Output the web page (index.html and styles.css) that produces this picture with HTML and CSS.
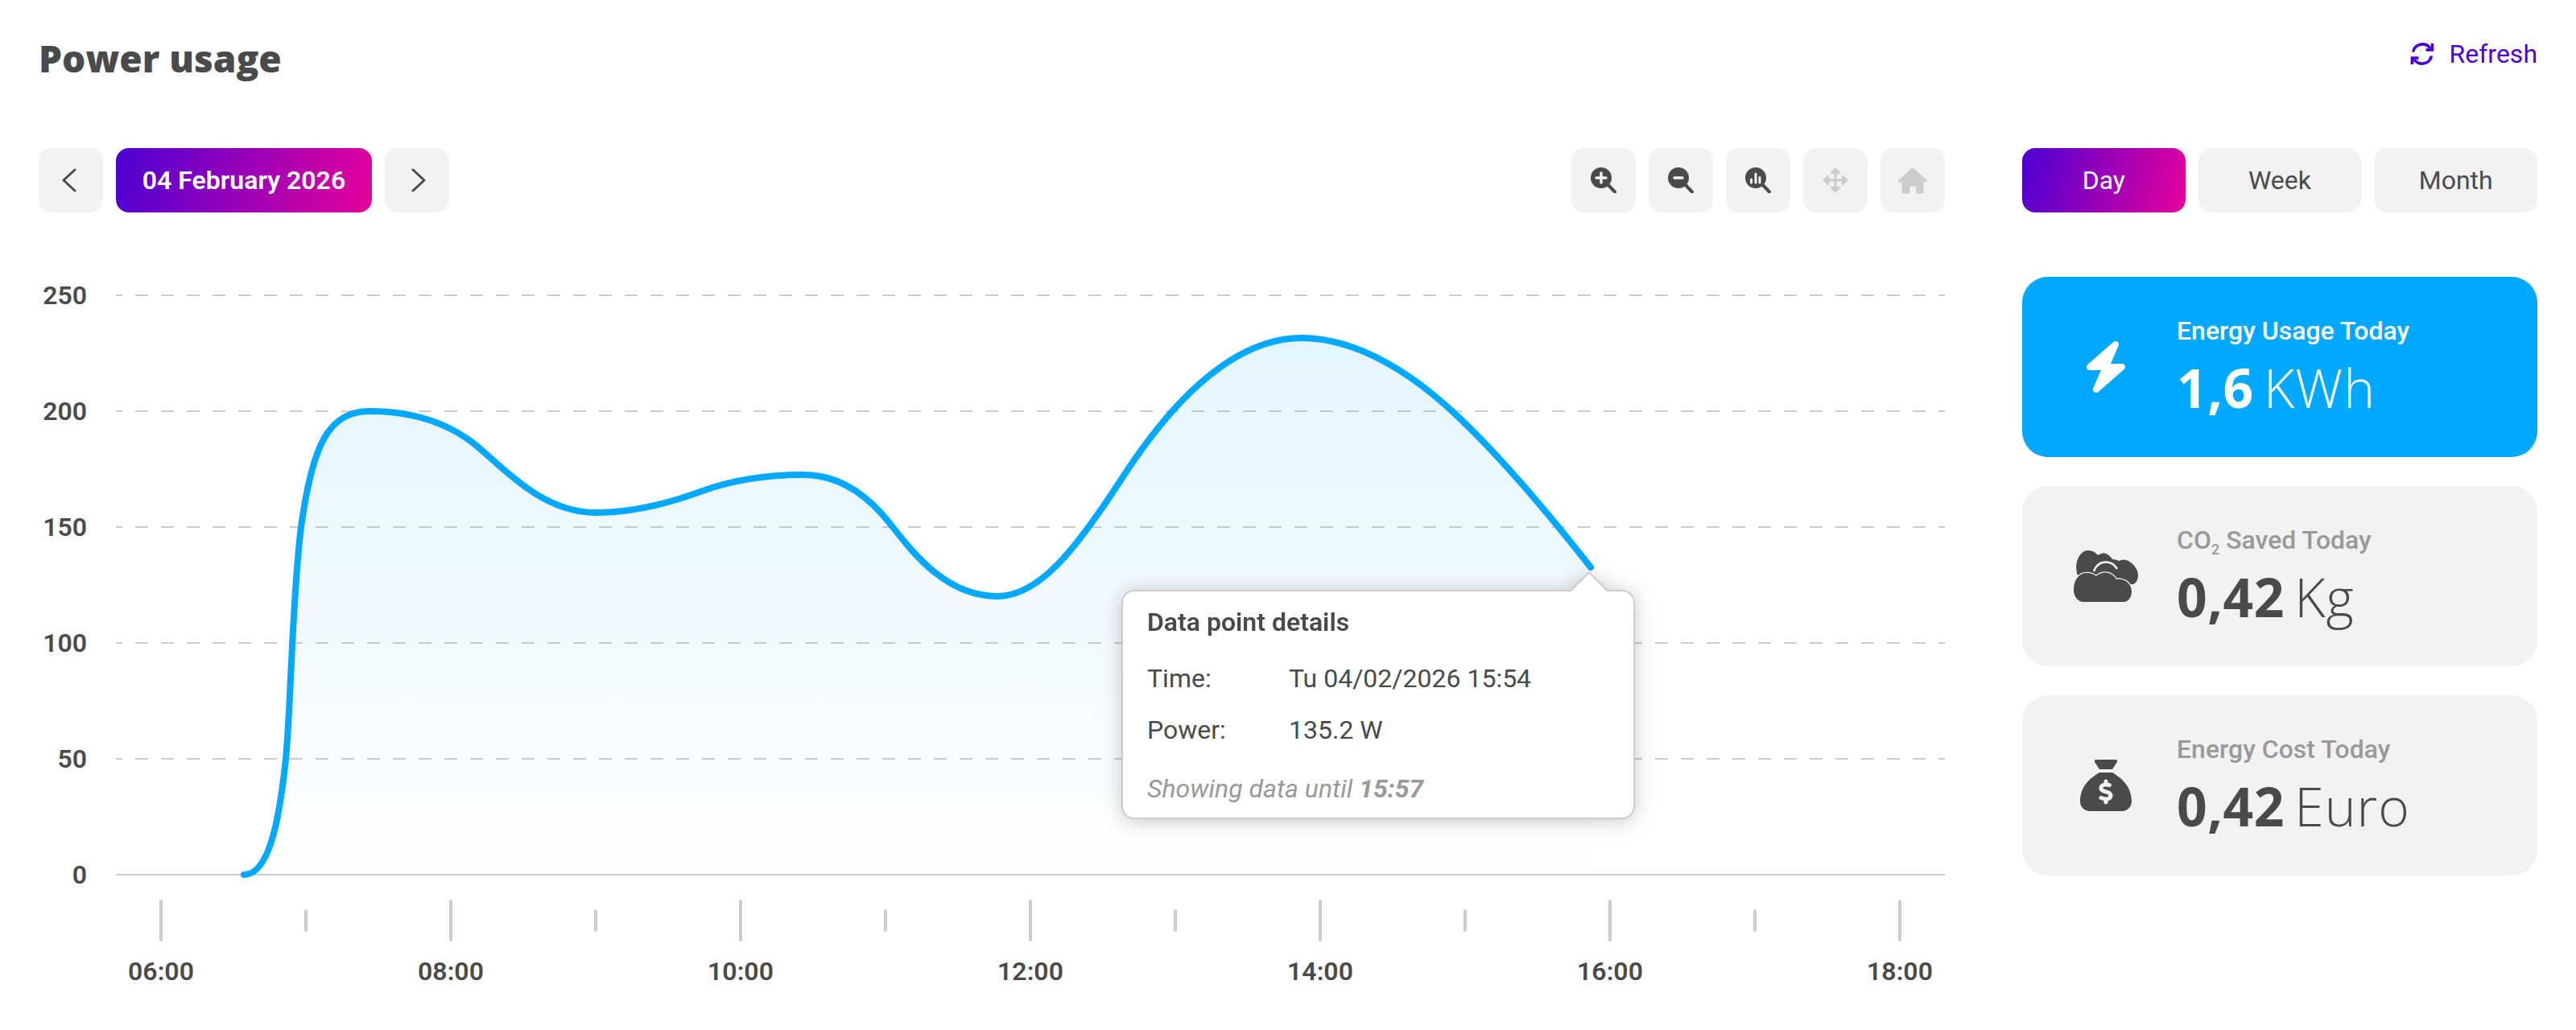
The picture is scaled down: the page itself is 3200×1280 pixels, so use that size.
FILE: index.html
```html
<!DOCTYPE html>
<html lang="en">
<head>
<meta charset="utf-8">
<title>Power usage</title>
<link rel="stylesheet" href="styles.css">
</head>
<body>
<div class="page">
  <header class="topbar">
    <h1 class="title">Power usage</h1>
    <a class="refresh">
      <svg class="refresh-icon" viewBox="0 0 30 30"><path d="M3.6 12.5A11.8 11.8 0 0 1 25 8.2M26.4 17.5A11.8 11.8 0 0 1 5 21.8"/><path d="M27.5 2v8h-8M2.500 28v-8h8"/></svg>
      <span>Refresh</span>
    </a>
  </header>
  <main class="layout">
    <section class="chart-col">
      <div class="toolbar">
        <div class="date-nav">
          <button class="btn btn-square"><svg class="chev chev-left" viewBox="0 0 20 30"><path d="M17 2 3 15l14 13"/></svg></button>
          <button class="btn btn-date">04 February 2026</button>
          <button class="btn btn-square"><svg class="chev chev-right" viewBox="0 0 20 30"><path d="M3 2l14 13L3 28"/></svg></button>
        </div>
        <div class="tools">
          <button class="btn btn-square"><svg class="tool" viewBox="0 0 32 32"><circle class="dark" cx="13" cy="13" r="13"/><path class="handle" d="M21 21l9 9.500"/><path class="glyph" d="M13 7v12M7 13h12"/></svg></button>
          <button class="btn btn-square"><svg class="tool" viewBox="0 0 32 32"><circle class="dark" cx="13" cy="13" r="13"/><path class="handle" d="M21 21l9 9.500"/><path class="glyph" d="M8 13h10"/></svg></button>
          <button class="btn btn-square"><svg class="tool" viewBox="0 0 32 32"><circle class="dark" cx="13" cy="13" r="13"/><path class="handle" d="M21 21l9 9.500"/><path class="glyph thin" d="M7.500 19v-4M13 19V8M18 19v-6.500"/></svg></button>
          <button class="btn btn-square"><svg class="tool" viewBox="0 0 33 33"><path class="pan-shaft" d="M16.500 5v23M4 16.500h25"/><path class="pan-head" d="M16.500 1.500l5 5v1h-10v-1zM16.500 31.500l-5-5v-1h10v1zM1.500 16.500l5-5h1v10h-1zM31.500 16.500l-5 5h-1v-10h1z"/></svg></button>
          <button class="btn btn-square"><svg class="tool tool-home" viewBox="0 0 36 33"><path class="home" d="M18 0.500c.5 0 1 .2 1.400.6L35 15.500c1.300 1.200.6 3-1 3h-2.500V30c0 1.400-1 2.500-2.500 2.500h-4.500c-1.400 0-2.500-1-2.500-2.500v-5c0-1-.7-1.500-1.500-1.500h-4.500c-.9 0-1.500.6-1.500 1.500v5c0 1.400-1 2.500-2.500 2.500H7c-1.400 0-2.500-1-2.500-2.500V18.500H2c-1.600 0-2.300-1.800-1-3L16.600 1.100c.4-.4.900-.6 1.400-.6z"/></svg></button>
        </div>
      </div>
      <div class="chart">
        <svg class="plot" viewBox="48 300 2368 960">
          <defs>
            <linearGradient id="area" gradientUnits="userSpaceOnUse" x1="0" y1="420" x2="0" y2="1087">
              <stop offset="0" stop-color="#00a8ff" stop-opacity=".11"/>
              <stop offset="1" stop-color="#00a8ff" stop-opacity="0"/>
            </linearGradient>
          </defs>
          <g class="grid">
            <path d="M144 367H2416M144 511H2416M144 655H2416M144 799H2416M144 943H2416"/>
          </g>
          <path class="axis" d="M144 1087H2416"/>
          <g class="ticks">
            <path d="M200 1120v48M560 1120v48M920 1120v48M1280 1120v48M1640 1120v48M2000 1120v48M2360 1120v48"/>
            <path d="M380 1132v24M740 1132v24M1100 1132v24M1460 1132v24M1820 1132v24M2180 1132v24"/>
          </g>
          <g class="ylabels">
            <text x="108" y="378">250</text>
            <text x="108" y="522">200</text>
            <text x="108" y="666">150</text>
            <text x="108" y="810">100</text>
            <text x="108" y="954">50</text>
            <text x="108" y="1098">0</text>
          </g>
          <g class="xlabels">
            <text x="200" y="1218">06:00</text>
            <text x="560" y="1218">08:00</text>
            <text x="920" y="1218">10:00</text>
            <text x="1280" y="1218">12:00</text>
            <text x="1640" y="1218">14:00</text>
            <text x="2000" y="1218">16:00</text>
            <text x="2360" y="1218">18:00</text>
          </g>
          <path class="area" d="M303 1087C332 1087 346 1030 355 943C361 885 363 740 374 655C388 553 408 511 459 511C495 511 545 518 587 550C622 577 670 637 740 637C790 637 840 622 870 611C905 598 950 590 998 590C1040 590 1075 612 1105 650C1135 688 1175 741 1239 741C1290 741 1335 685 1392 597C1425 546 1510 420 1617 420C1690 420 1760 470 1805 512C1860 563 1925 640 1976 705V1087Z"/>
          <path class="line" d="M303 1087C332 1087 346 1030 355 943C361 885 363 740 374 655C388 553 408 511 459 511C495 511 545 518 587 550C622 577 670 637 740 637C790 637 840 622 870 611C905 598 950 590 998 590C1040 590 1075 612 1105 650C1135 688 1175 741 1239 741C1290 741 1335 685 1392 597C1425 546 1510 420 1617 420C1690 420 1760 470 1805 512C1860 563 1925 640 1976 705"/>
        </svg>
        <div class="tooltip">
          <div class="tooltip-title">Data point details</div>
          <div class="tooltip-rows">
            <span>Time:</span><span>Tu 04/02/2026 15:54</span>
            <span>Power:</span><span>135.2 W</span>
          </div>
          <div class="tooltip-note">Showing data until <b>15:57</b></div>
        </div>
      </div>
    </section>
    <aside class="side-col">
      <div class="tabs">
        <button class="btn btn-tab active">Day</button>
        <button class="btn btn-tab">Week</button>
        <button class="btn btn-tab">Month</button>
      </div>
      <div class="cards">
        <div class="card card-blue">
          <div class="card-icon"><svg class="icon-bolt" viewBox="0 0 448 512"><path d="M349.400 44.600c5.900-13.700 1.500-29.700-10.600-38.500s-28.600-8.100-40 1.700l-256 224c-10 8.800-13.600 22.900-8.900 35.300S50.700 288 64 288H175.500L98.600 467.400c-5.900 13.700-1.500 29.700 10.600 38.500s28.600 8.100 40-1.700l256-224c10-8.800 13.600-22.900 8.900-35.300s-16.600-20.700-30-20.700H272.500L349.400 44.600z"/></svg></div>
          <div class="card-text">
            <div class="card-label">Energy Usage Today</div>
            <div class="card-value"><b>1,6</b> KWh</div>
          </div>
        </div>
        <div class="card">
          <div class="card-icon"><svg class="icon-clouds" viewBox="0 0 80 64">
            <path d="M4 27C1 16 7 0 18 0C23 0 27 2 30 6C33 4 36 3 40 4C43 5 46 8 48 11C52 11 54 12 56 13C60 11 64 11 68 13C75 17 80 24 80 31C80 36 78 40 74 42L40 42L4 30Z"/>
            <path class="cloud-arc" d="M25 26C28 18 34 14.500 40 14.500C46 14.500 51 18 54 23"/>
            <path class="cloud-front" d="M12 64C5 64 0 57 0 49C0 36 7 28 16 28C21 28 25 29.500 28 32C31 29 35 27.500 39 27.500C45 27.500 50 31 53 36C55 35.500 57 35.500 59 36C66 37 72 43 72 51C72 58 68 64 62 64Z"/>
          </svg></div>
          <div class="card-text">
            <div class="card-label">CO<sub>2</sub> Saved Today</div>
            <div class="card-value"><b>0,42</b> Kg</div>
          </div>
        </div>
        <div class="card">
          <div class="card-icon"><svg class="icon-sack" viewBox="0 0 512 512"><path d="M320 96H192L144.600 24.900C137.500 14.200 145.100 0 157.900 0H354.100c12.800 0 20.400 14.200 13.300 24.900L320 96zM192 128H320c3.800 2.500 8.100 5.300 13 8.400C389.700 172.700 512 250.900 512 416c0 53-43 96-96 96H96c-53 0-96-43-96-96C0 250.900 122.300 172.700 179 136.400l0 0 0 0c4.800-3.100 9.200-5.900 13-8.400zm84 88c0-11-9-20-20-20s-20 9-20 20v14c-7.600 1.700-15.200 4.400-22.200 8.500c-13.900 8.300-25.900 22.800-25.800 43.900c.1 20.300 12 33.100 24.700 40.700c11 6.600 24.700 10.800 35.600 14l1.700 .5c12.600 3.800 21.800 6.800 28 10.700c5.100 3.200 5.800 5.400 5.900 8.200c.1 5-1.800 8-5.900 10.500c-5 3.100-12.900 5-21.400 4.700c-11.100-.4-21.500-3.900-35.100-8.500c-2.300-.8-4.700-1.600-7.200-2.400c-10.500-3.500-21.800 2.200-25.300 12.600s2.200 21.800 12.600 25.300c1.900 .6 4 1.300 6.100 2.100l0 0 0 0c8.300 2.900 17.900 6.200 28.200 8.400V424c0 11 9 20 20 20s20-9 20-20V410.200c8-1.700 16-4.500 23.200-9c14.300-8.900 25.100-24.100 24.800-45c-.3-20.300-11.700-33.400-24.600-41.600c-11.500-7.200-25.900-11.600-37.100-15l-.7-.2c-12.800-3.900-21.900-6.700-28.300-10.500c-5.200-3.100-5.300-4.900-5.300-6.700c0-3.700 1.400-6.500 6.200-9.300c5.400-3.200 13.600-5.100 21.500-5c9.600 .1 20.200 2.200 31.200 5.200c10.700 2.800 21.600-3.500 24.500-14.200s-3.500-21.600-14.200-24.500c-6.500-1.700-13.700-3.400-21.100-4.700V216z"/></svg></div>
          <div class="card-text">
            <div class="card-label">Energy Cost Today</div>
            <div class="card-value"><b>0,42</b> Euro</div>
          </div>
        </div>
      </div>
    </aside>
  </main>
</div>
</body>
</html>
```
FILE: styles.css
```css
* { box-sizing: border-box; }
html, body { margin: 0; background: #fff; }
body { font-family: Roboto, "Liberation Sans", sans-serif; color: #4a4a4a; font-size: 32px; }
.page { width: 3200px; height: 1280px; padding: 0 48px; overflow: hidden; }

.topbar { height: 184px; display: flex; justify-content: space-between; align-items: flex-start; }
.title { margin: 44px 0 0; font-family: "Open Sans", sans-serif; font-weight: 800; font-size: 46px; line-height: 56px; color: #4a4a4a; }
.refresh { margin-top: 47px; display: flex; align-items: center; gap: 19px; color: #4b00d4; font-size: 32px; line-height: 40px; }
.refresh-icon { width: 30px; height: 30px; fill: none; stroke: #4b00d4; stroke-width: 3.6; }

.layout { display: grid; grid-template-columns: 2368px 640px; column-gap: 96px; }
.chart-col { display: flex; flex-direction: column; }
.toolbar { display: flex; justify-content: space-between; height: 80px; }
.date-nav, .tools { display: flex; gap: 16px; }

.btn { border: 0; margin: 0; padding: 0; height: 80px; border-radius: 16px; background: #f2f2f2; color: #4a4a4a; font-family: Roboto, sans-serif; font-size: 32px; display: flex; align-items: center; justify-content: center; }
.btn-square { width: 80px; }
.btn-date { width: 318px; color: #fff; font-weight: 600; background: linear-gradient(105deg, #4b00d4, #e6009a); }
.btn-tab.active { color: #fff; background: linear-gradient(105deg, #4b00d4, #e6009a); }

.chev { width: 20px; height: 30px; fill: none; stroke: #4a4a4a; stroke-width: 3; stroke-linecap: round; stroke-linejoin: round; }
.chev-left { margin-right: 4px; }
.chev-right { margin-left: 4px; }
.tool { width: 32px; height: 32px; }
.tool-home { width: 36px; height: 33px; }
.dark { fill: #4a4a4a; }
.handle { fill: none; stroke: #4a4a4a; stroke-width: 4; stroke-linecap: round; }
.glyph { fill: none; stroke: #f2f2f2; stroke-width: 3.4; stroke-linecap: round; }
.glyph.thin { stroke-width: 3; }
.pan-shaft { fill: none; stroke: #ccc; stroke-width: 3; }
.pan-head { fill: #ccc; stroke: #ccc; stroke-width: 2; stroke-linejoin: round; }
.home { fill: #ccc; }

.chart { position: relative; margin-top: 36px; height: 960px; }
.plot { display: block; width: 2368px; height: 960px; font-family: Roboto, sans-serif; font-size: 32px; font-weight: 600; }
.grid path { fill: none; stroke: #ccc; stroke-width: 2; stroke-dasharray: 16 16; stroke-dashoffset: 8; }
.axis { fill: none; stroke: #ccc; stroke-width: 2; }
.ticks path { fill: none; stroke: #ccc; stroke-width: 4; stroke-linecap: round; }
.ylabels text { text-anchor: end; fill: #4a4a4a; }
.xlabels text { text-anchor: middle; fill: #4a4a4a; }
.area { fill: url(#area); }
.line { fill: none; stroke: #00a8ff; stroke-width: 8; stroke-linecap: round; stroke-linejoin: round; }

.tooltip { position: absolute; left: 1345px; top: 433px; width: 638px; height: 285px; padding: 18px 30px; background: #fff; border: 2px solid #ccc; border-radius: 16px; filter: drop-shadow(0 2px 12px rgba(0, 0, 0, .22)); }
.tooltip::before { content: ""; position: absolute; right: 38px; top: -18px; width: 32px; height: 32px; background: #fff; border-top: 2px solid #ccc; border-left: 2px solid #ccc; border-top-left-radius: 3px; transform: rotate(45deg); }
.tooltip-title { position: relative; font-weight: 600; line-height: 40px; }
.tooltip-rows { margin-top: 30px; display: grid; grid-template-columns: 176px 1fr; row-gap: 24px; line-height: 40px; }
.tooltip-note { margin-top: 33px; font-style: italic; color: #999; line-height: 40px; }
.tooltip-note b { font-weight: 700; }

.side-col { display: flex; flex-direction: column; }
.tabs { display: grid; grid-template-columns: repeat(3, 1fr); column-gap: 16px; }
.cards { margin-top: 80px; display: flex; flex-direction: column; gap: 36px; }
.card { height: 224px; border-radius: 32px; background: #f2f2f2; padding-left: 64px; display: flex; align-items: center; gap: 48px; }
.card-blue { background: #00a8ff; color: #fff; }
.card-icon { width: 80px; height: 64px; display: flex; justify-content: center; flex: none; }
.icon-bolt { width: 56px; height: 64px; fill: #fff; }
.icon-clouds { width: 80px; height: 64px; fill: #4a4a4a; }
.cloud-arc { fill: none; stroke: #f2f2f2; stroke-width: 2.500; }
.cloud-front { stroke: #f2f2f2; stroke-width: 2.500; paint-order: stroke; }
.icon-sack { width: 64px; height: 64px; fill: #4a4a4a; }
.card-text { display: flex; flex-direction: column; }
.card-label { font-weight: 500; font-size: 32px; line-height: 40px; color: #999; }
.card-blue .card-label { color: #fff; }
.card-label sub { font-size: 18px; line-height: 0; }
.card-value { margin-top: 10px; font-family: "Open Sans", sans-serif; font-weight: 350; font-size: 66px; line-height: 80px; letter-spacing: 1px; word-spacing: -6px; }
.card-value b { font-weight: 700; letter-spacing: .5px; }
```
